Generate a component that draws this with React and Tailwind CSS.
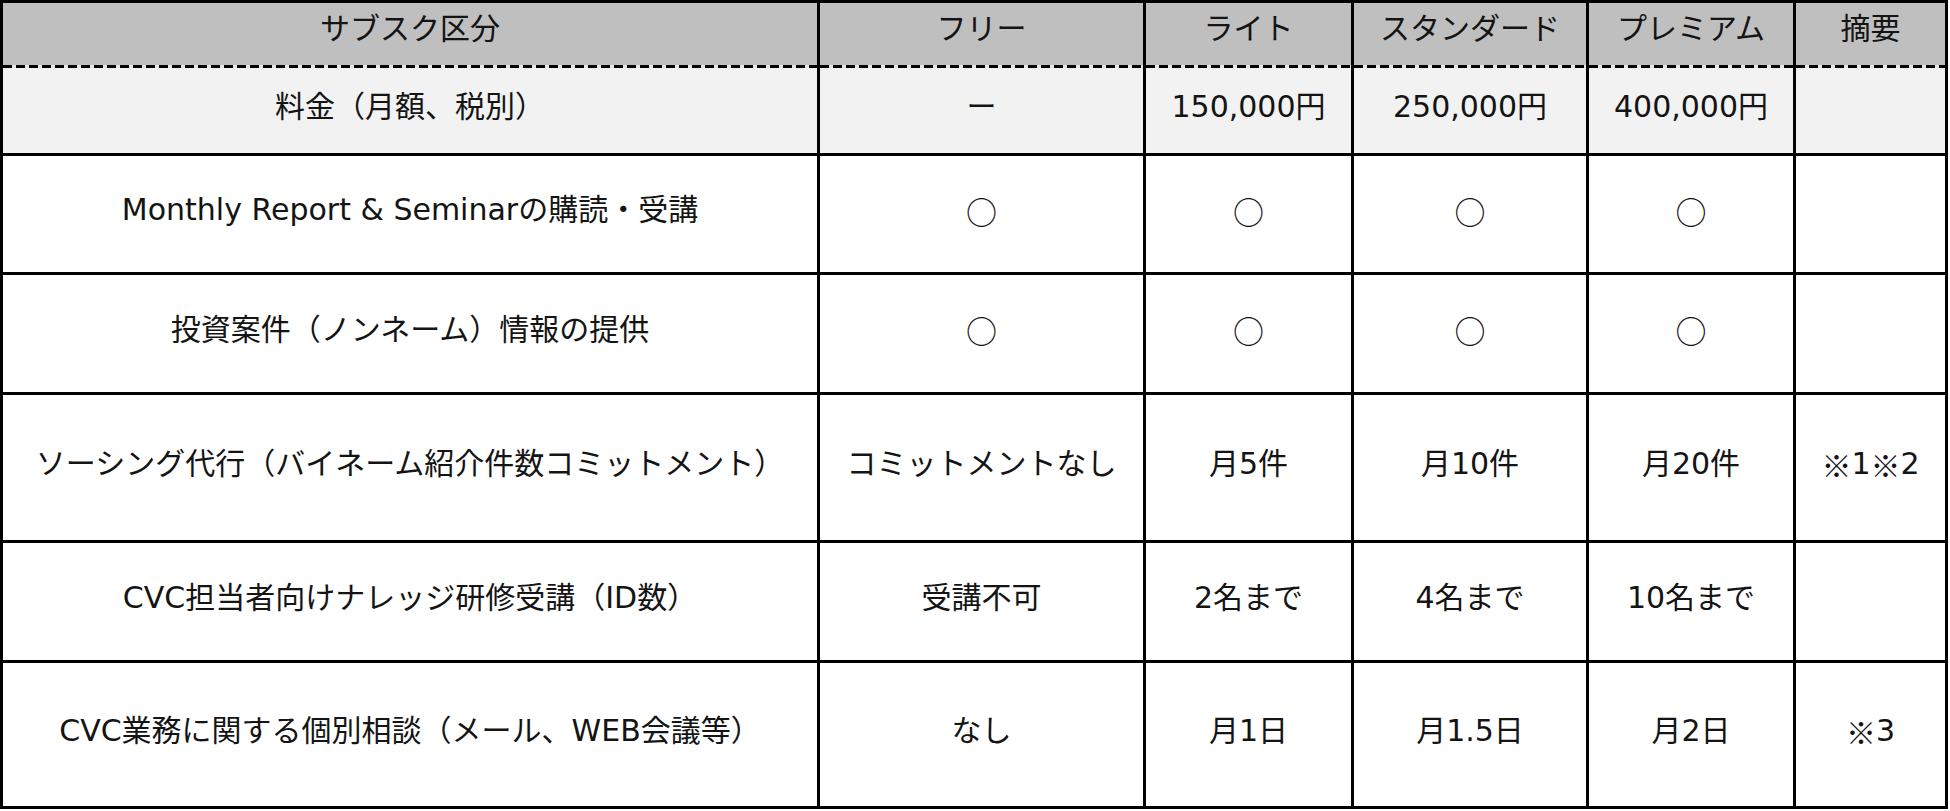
import React from "react";

const cols = "grid grid-cols-[814px_323px_205px_232px_204px_149px] gap-x-[3px]";

const O = () => (
  <span className="[font-family:'Noto_Sans_CJK_JP',sans-serif] text-[31px]">○</span>
);

const Note = ({ children }) => (
  <span className="[font-family:'Noto_Sans_CJK_JP',sans-serif]">{children}</span>
);

const rows = [
  {
    h: "h-[85px]",
    bg: "bg-[#f2f2f2]",
    cells: ["料金（月額、税別）", "ー", "150,000円", "250,000円", "400,000円", ""],
  },
  {
    h: "h-[116px]",
    bg: "bg-white",
    cells: ["Monthly Report & Seminarの購読・受講", <O />, <O />, <O />, <O />, ""],
  },
  {
    h: "h-[117px]",
    bg: "bg-white",
    cells: ["投資案件（ノンネーム）情報の提供", <O />, <O />, <O />, <O />, ""],
  },
  {
    h: "h-[145px]",
    bg: "bg-white",
    cells: [
      "ソーシング代行（バイネーム紹介件数コミットメント）",
      "コミットメントなし",
      "月5件",
      "月10件",
      "月20件",
      <>
        <Note>※</Note>1<Note>※</Note>2
      </>,
    ],
  },
  {
    h: "h-[117px]",
    bg: "bg-white",
    cells: ["CVC担当者向けナレッジ研修受講（ID数）", "受講不可", "2名まで", "4名まで", "10名まで", ""],
  },
  {
    h: "h-[143px]",
    bg: "bg-white",
    cells: [
      "CVC業務に関する個別相談（メール、WEB会議等）",
      "なし",
      "月1日",
      "月1.5日",
      "月2日",
      <>
        <Note>※</Note>3
      </>,
    ],
  },
];

const header = ["サブスク区分", "フリー", "ライト", "スタンダード", "プレミアム", "摘要"];

export default function App() {
  return (
    <div className="w-[1950px] h-[811px] bg-white text-[#141414] text-[30px] leading-none [font-family:'DejaVu_Sans','Noto_Sans_CJK_JP',sans-serif]">
      <div className="w-[1948px] bg-black p-[3px] flex flex-col">
        <div className={cols}>
          {header.map((t, i) => (
            <div
              key={i}
              className="h-[62px] bg-[#bfbfbf] flex items-center justify-center pb-[11px] whitespace-nowrap"
            >
              {t}
            </div>
          ))}
        </div>
        <div className={cols}>
          {header.map((_, i) => (
            <div
              key={i}
              className="h-[3px] bg-[repeating-linear-gradient(90deg,#000_0px,#000_9px,#e6e6e6_9px,#e6e6e6_13px)]"
            />
          ))}
        </div>
        <div className="flex flex-col gap-y-[3px]">
          {rows.map((r, ri) => (
            <div key={ri} className={cols}>
              {r.cells.map((c, ci) => (
                <div
                  key={ci}
                  className={`${r.h} ${r.bg} flex items-center justify-center pb-[8px] whitespace-nowrap`}
                >
                  {c}
                </div>
              ))}
            </div>
          ))}
        </div>
      </div>
    </div>
  );
}
